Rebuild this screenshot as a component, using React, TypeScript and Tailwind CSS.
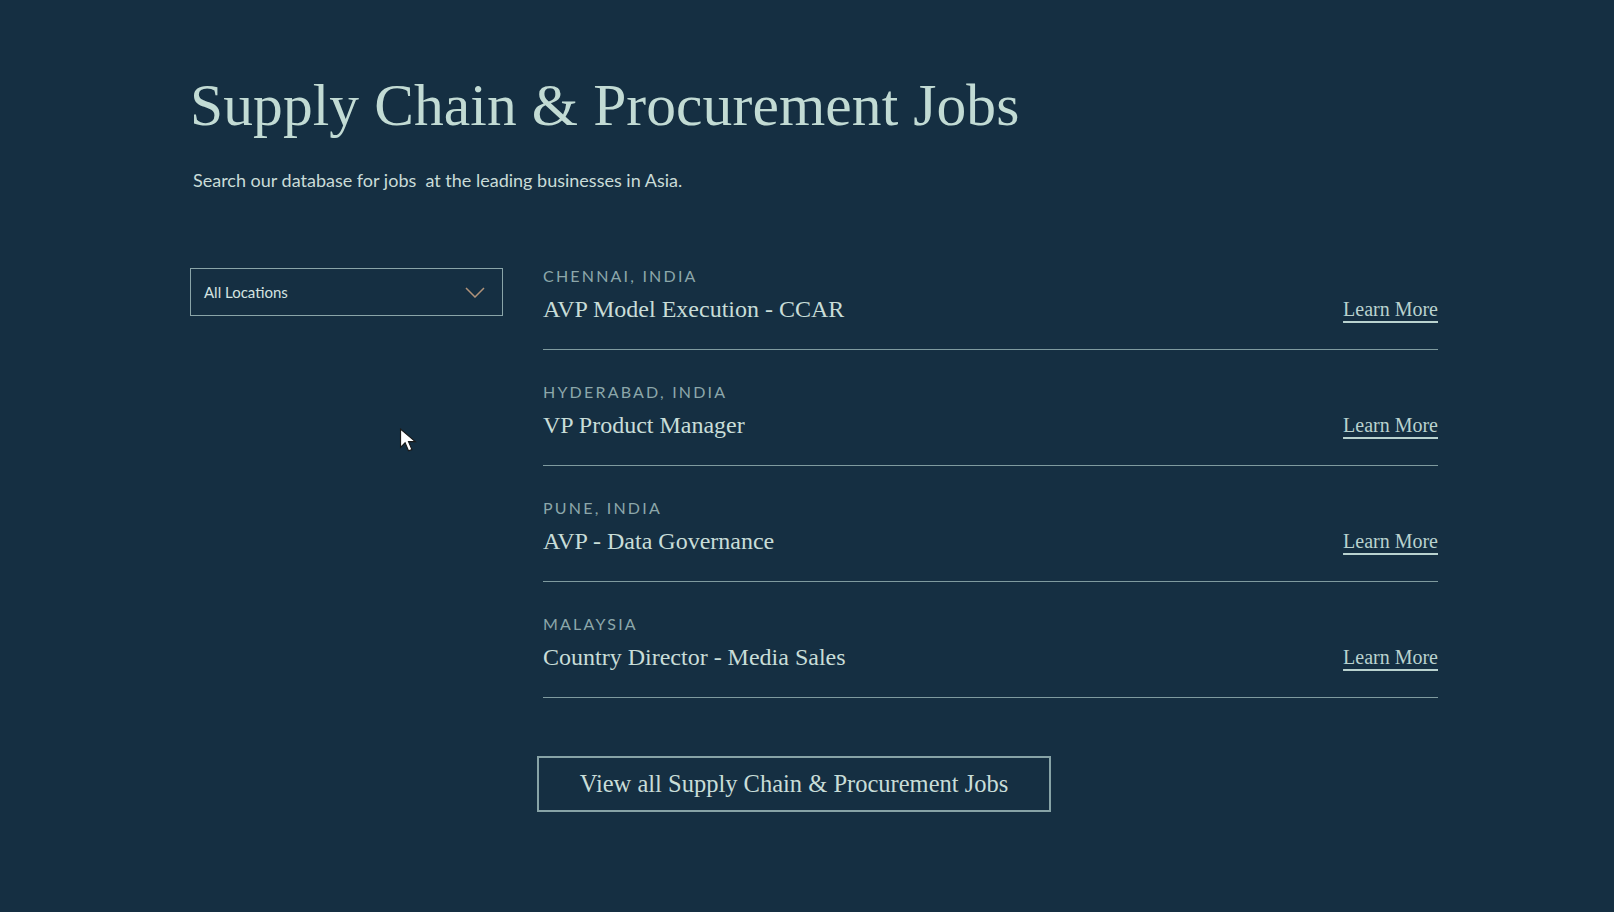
import React from "react";

const jobs = [
  { location: "CHENNAI, INDIA", title: "AVP Model Execution - CCAR" },
  { location: "HYDERABAD, INDIA", title: "VP Product Manager" },
  { location: "PUNE, INDIA", title: "AVP - Data Governance" },
  { location: "MALAYSIA", title: "Country Director - Media Sales" },
];

const serif = "font-['Liberation_Serif',serif]";
const sans = "font-['Lato','Open_Sans',sans-serif]";

const App: React.FC = () => {
  return (
    <div className="relative min-h-[912px] w-full bg-[#152f42] text-[#c7ddd8]">
      <div className="pl-[190px] pt-[70px]">
        {/* Heading */}
        <h1 className={`${serif} text-[59.5px] leading-[70px] tracking-[0.1px] text-[#c2dbd4]`}>
          Supply Chain &amp; Procurement Jobs
        </h1>
        <p className={`${sans} mt-[29px] ml-[3px] text-[18px] leading-[22px] text-[#c9dcd8]`}>
          Search our database for jobs&nbsp; at the leading businesses in Asia.
        </p>

        {/* Body */}
        <div className="mt-[75px] flex gap-[40px]">
          {/* Location filter */}
          <div className="w-[313px] shrink-0 pt-[2px]">
            <div className="flex h-[48px] items-center justify-between border border-[#8aa5a8] pl-[13px] pr-[17px]">
              <span className={`${sans} text-[15px] text-[#d4e3e0]`}>All Locations</span>
              <svg width="20" height="11" viewBox="0 0 20 11" fill="none">
                <path d="M1 1l9 9 9-9" stroke="#b0937a" strokeWidth="1.5" />
              </svg>
            </div>
          </div>

          {/* Job list */}
          <div className="w-[895px]">
            {jobs.map((job) => (
              <div key={job.title} className="mb-[32px] border-b border-[#7f9b9f] pb-[26px] last:mb-0">
                <div className={`${sans} text-[16px] leading-[20px] tracking-[2.2px] text-[#8ca7aa]`}>
                  {job.location}
                </div>
                <div className="mt-[9px] flex items-center justify-between">
                  <span className={`${serif} text-[24px] leading-[28px] text-[#c8ddd8]`}>{job.title}</span>
                  <a
                    href="#"
                    className={`${serif} text-[20px] leading-[24px] text-[#b9d2cf] underline decoration-[1.5px] underline-offset-[5px]`}
                  >
                    Learn More
                  </a>
                </div>
              </div>
            ))}
          </div>
        </div>

        {/* View all */}
        <div className="mt-[58px] ml-[347px]">
          <button
            className={`${serif} flex h-[56px] w-[514px] items-center justify-center border-2 border-[#87a3a6] text-[24.5px] text-[#c8ddd8]`}
          >
            View all Supply Chain &amp; Procurement Jobs
          </button>
        </div>
      </div>

      {/* Mouse pointer */}
      <svg className="absolute left-[399px] top-[428px]" width="19" height="25" viewBox="0 0 16 22">
        <path d="M1 1v16l4-4 3 7 3-1-3-7h6z" fill="#ffffff" stroke="#1a1a1a" strokeWidth="1" />
      </svg>
    </div>
  );
};

export default App;
